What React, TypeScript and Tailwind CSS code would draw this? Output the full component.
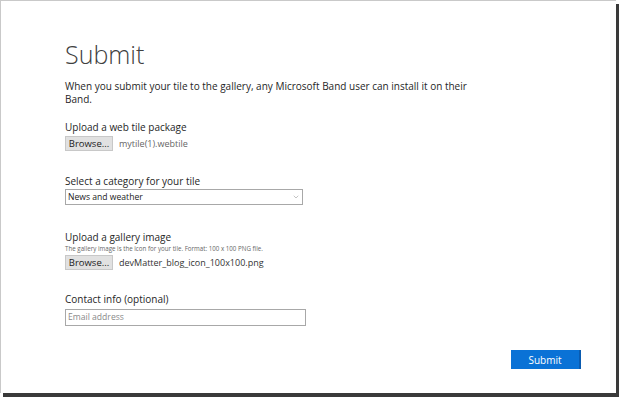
import { ChevronDown } from "lucide-react"

const font = { fontFamily: '"Open Sans", "Segoe UI", sans-serif' }

type BrowseProps = {
  fileName: string
  dark?: boolean
}

const BrowseRow = ({ fileName, dark }: BrowseProps) => (
  <div className="flex h-[15px] items-center gap-[6px]">
    <button className="h-[15px] w-[48px] border border-[#c8c8c8] bg-[#e1e1e1] text-[9.5px] leading-none text-[#222]">
      Browse...
    </button>
    <span
      className={`text-[9px] leading-none ${
        dark ? "text-[#333]" : "text-[#666]"
      }`}
    >
      {fileName}
    </span>
  </div>
)

const App = () => {
  return (
    <div className="h-[398px] w-[620px] bg-white" style={font}>
      <div className="h-[393px] w-[616px] border-l border-t border-[#c9c9c9] bg-white shadow-[3px_4px_0_#3a3a3a]">
        <div className="pl-[64px] pt-[35px] text-[#262626]">
          <h1 className="text-[25px] font-light leading-[36px] text-[#404040]">
            Submit
          </h1>

          <p className="mt-[8px] text-[10px] leading-[13px]">
            When you submit your tile to the gallery, any Microsoft Band user
            can install it on their
            <br />
            Band.
          </p>

          <div className="mt-[14px] text-[10px] leading-[14px]">
            Upload a web tile package
          </div>
          <div className="mt-[2px]">
            <BrowseRow fileName="mytile(1).webtile" />
          </div>

          <div className="mt-[23px] text-[10px] leading-[14px]">
            Select a category for your tile
          </div>
          <div className="mt-[1px] flex h-[16px] w-[238px] items-center justify-between border border-[#a8a8a8] px-[2px]">
            <span className="text-[8.6px] leading-none text-[#222]">
              News and weather
            </span>
            <ChevronDown size={8} strokeWidth={1.5} className="text-[#888]" />
          </div>

          <div className="mt-[25px] text-[10px] leading-[14px]">
            Upload a gallery image
          </div>
          <div className="text-[6.2px] leading-[9px] text-[#666]">
            The gallery image is the icon for your tile. Format: 100 x 100 PNG
            file.
          </div>
          <div className="mt-[2px]">
            <BrowseRow fileName="devMatter_blog_icon_100x100.png" dark />
          </div>

          <div className="mt-[22px] text-[10px] leading-[14px]">
            Contact info (optional)
          </div>
          <div className="mt-[3px] flex h-[17px] w-[241px] items-center border border-[#a8a8a8] px-[2px]">
            <span className="text-[8.6px] leading-none text-[#8a8a8a]">
              Email address
            </span>
          </div>

          <div className="mt-[24px] flex w-[516px] justify-end">
            <button className="h-[19px] w-[70px] border-r-2 border-[#0a5bb0] bg-[#0a72d6] text-[10px] leading-none text-white">
              Submit
            </button>
          </div>
        </div>
      </div>
    </div>
  )
}

export default App
